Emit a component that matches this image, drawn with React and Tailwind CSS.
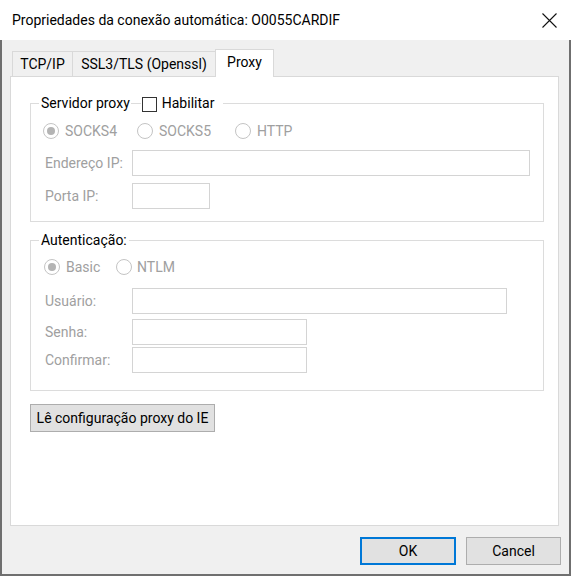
export default function App() {
  const gray = "text-[#a0a0a0]";
  const Radio = ({ checked }) => (
    <span className="w-[16px] h-[16px] rounded-full border border-[#c4c4c4] bg-white flex items-center justify-center shrink-0">
      {checked && <span className="w-[8px] h-[8px] rounded-full bg-[#b4b4b4]" />}
    </span>
  );
  const Input = ({ w }) => (
    <div className={`h-[26px] border border-[#d4d4d4] bg-white ${w}`} />
  );
  return (
    <div className="w-[571px] h-[576px] flex flex-col bg-[#f0f0f0] font-['Roboto',sans-serif] text-[14px] leading-[20px] text-black overflow-hidden">
      <div className="h-[40px] bg-white flex items-center justify-between pl-[12px] pr-[14px] shrink-0">
        <span className="text-[14px]">Propriedades da conexão automática: O0055CARDIF</span>
        <svg width="15" height="15" viewBox="0 0 15 15">
          <path d="M0.5 0.5L14.5 14.5M14.5 0.5L0.5 14.5" stroke="#111" strokeWidth="1.1" />
        </svg>
      </div>
      <div className="flex-1 flex flex-col border-l-2 border-r-2 border-b-2 border-[#6f6f6f] pl-[8px] pr-[8px]">
        <div className="flex items-end h-[27px] mt-[9px] pl-[2px]">
          <div className="h-[25px] w-[61px] border-l border-t border-r border-[#d9d9d9] bg-[#f0f0f0] flex items-center justify-center">
            TCP/IP
          </div>
          <div className="h-[25px] w-[142px] border-t border-[#d9d9d9] bg-[#f0f0f0] flex items-center justify-center">
            SSL3/TLS (Openssl)
          </div>
          <div className="h-[28px] -mb-px w-[59px] border-l border-t border-r border-[#d9d9d9] bg-white relative z-10 flex items-center justify-center pb-[3px]">
            Proxy
          </div>
        </div>
        <div className="h-[450px] mr-[2px] bg-white border border-[#d9d9d9] pl-[19px] pr-[14px] pt-[16px] flex flex-col">
          <fieldset className="border border-[#dcdcdc] pb-[12px]">
            <legend className="ml-[8px] pl-[2px] pr-[9px] h-[21px] leading-[21px] flex items-center">
              <span>Servidor proxy</span>
              <span className="ml-[1px] w-[10px] h-px bg-[#dcdcdc]" />
              <span className="ml-[1px] mt-[2px] w-[15px] h-[15px] border border-[#333] bg-white" />
              <span className="ml-[5px]">Habilitar</span>
            </legend>
            <div className={`flex items-center h-[20px] mt-[7px] pl-[12px] ${gray}`}>
              <div className="w-[94px] flex items-center gap-[6px]"><Radio checked />SOCKS4</div>
              <div className="w-[98px] flex items-center gap-[6px]"><Radio />SOCKS5</div>
              <div className="flex items-center gap-[6px]"><Radio />HTTP</div>
            </div>
            <div className={`flex items-center mt-[9px] pl-[14px] ${gray}`}>
              <span className="w-[87px]">Endereço IP:</span>
              <Input w="w-[398px]" />
            </div>
            <div className={`flex items-center mt-[7px] pl-[14px] ${gray}`}>
              <span className="w-[87px]">Porta IP:</span>
              <Input w="w-[78px]" />
            </div>
          </fieldset>
          <fieldset className="border border-[#dcdcdc] pb-[17px] mt-[8px]">
            <legend className="ml-[8px] px-[2px] h-[21px] leading-[21px]">Autenticação:</legend>
            <div className={`flex items-center h-[20px] mt-[6px] pl-[13px] ${gray}`}>
              <div className="w-[72px] flex items-center gap-[6px]"><Radio checked />Basic</div>
              <div className="flex items-center gap-[5px]"><Radio />NTLM</div>
            </div>
            <div className={`flex items-center mt-[11px] pl-[14px] ${gray}`}>
              <span className="w-[87px]">Usuário:</span>
              <Input w="w-[375px]" />
            </div>
            <div className={`flex items-center mt-[5px] pl-[14px] ${gray}`}>
              <span className="w-[87px]">Senha:</span>
              <Input w="w-[175px]" />
            </div>
            <div className={`flex items-center mt-[2px] pl-[14px] ${gray}`}>
              <span className="w-[87px]">Confirmar:</span>
              <Input w="w-[175px]" />
            </div>
          </fieldset>
          <div className="mt-[13px]">
            <button className="w-[185px] h-[28px] bg-[#e1e1e1] border border-[#adadad] flex items-center justify-center">
              Lê configuração proxy do IE
            </button>
          </div>
        </div>
        <div className="flex justify-end gap-[10px] mt-[11px]">
          <button className="w-[96px] h-[28px] bg-[#e1e1e1] border-2 border-[#0078d7] flex items-center justify-center">OK</button>
          <button className="w-[95px] h-[28px] bg-[#e1e1e1] border border-[#adadad] flex items-center justify-center">Cancel</button>
        </div>
      </div>
    </div>
  );
}
